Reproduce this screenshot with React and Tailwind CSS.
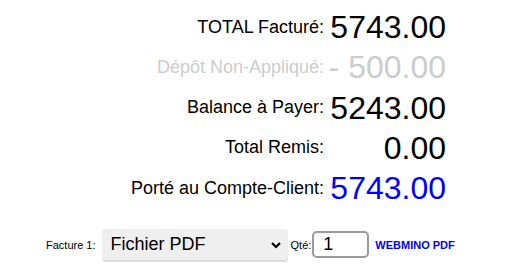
const ROWS = [
  { label: "TOTAL Facturé:", value: "5743.00", tone: "text-black", labelTone: "text-black" },
  { label: "Dépôt Non-Appliqué:", value: "- 500.00", tone: "text-[#cccccc]", labelTone: "text-[#cccccc]" },
  { label: "Balance à Payer:", value: "5243.00", tone: "text-black", labelTone: "text-black" },
  { label: "Total Remis:", value: "0.00", tone: "text-black", labelTone: "text-black" },
  { label: "Porté au Compte-Client:", value: "5743.00", tone: "text-[#0000ff]", labelTone: "text-black" },
];

export default function App() {
  return (
    <div className="w-[508px] h-[265px] bg-white overflow-hidden font-['Liberation_Sans',Arial,sans-serif]">
      {/* ── Totaux ── */}
      <div className="pt-[7px] grid grid-cols-[324px_122px]">
        {ROWS.map((r) => (
          <div key={r.label} className="contents">
            <div className={`h-[40.25px] flex items-center justify-end text-[18px] ${r.labelTone}`}>
              {r.label}
            </div>
            <div className={`h-[40.25px] flex items-center justify-end text-[32px] leading-none ${r.tone}`}>
              {r.value}
            </div>
          </div>
        ))}
      </div>

      {/* ── Facture ── */}
      <div className="mt-[21px] flex items-center h-[31px]">
        <span className="ml-[46px] text-[11px] text-black">Facture 1:</span>
        <div className="ml-[6px] w-[186px] h-[31px] bg-[#efefef] rounded-[4px] shadow-[0_2px_0_#dcdcdc] flex items-center justify-between pl-[9px] pr-[6px]">
          <span className="text-[18px] text-black">Fichier PDF</span>
          <svg width="12" height="12" viewBox="0 0 12 12">
            <path d="M2 4l4 4 4-4" fill="none" stroke="#000" strokeWidth="2.2" />
          </svg>
        </div>
        <span className="ml-[3px] text-[11px] text-black">Qté:</span>
        <div className="ml-[1px] w-[57px] h-[27px] border-2 border-[#9a9a9a] rounded-[5px] bg-white flex items-center pl-[9px]">
          <span className="text-[18px] text-black">1</span>
        </div>
        <span className="ml-[6px] text-[11px] font-bold text-[#0000ff]">WEBMINO PDF</span>
      </div>
    </div>
  );
}
